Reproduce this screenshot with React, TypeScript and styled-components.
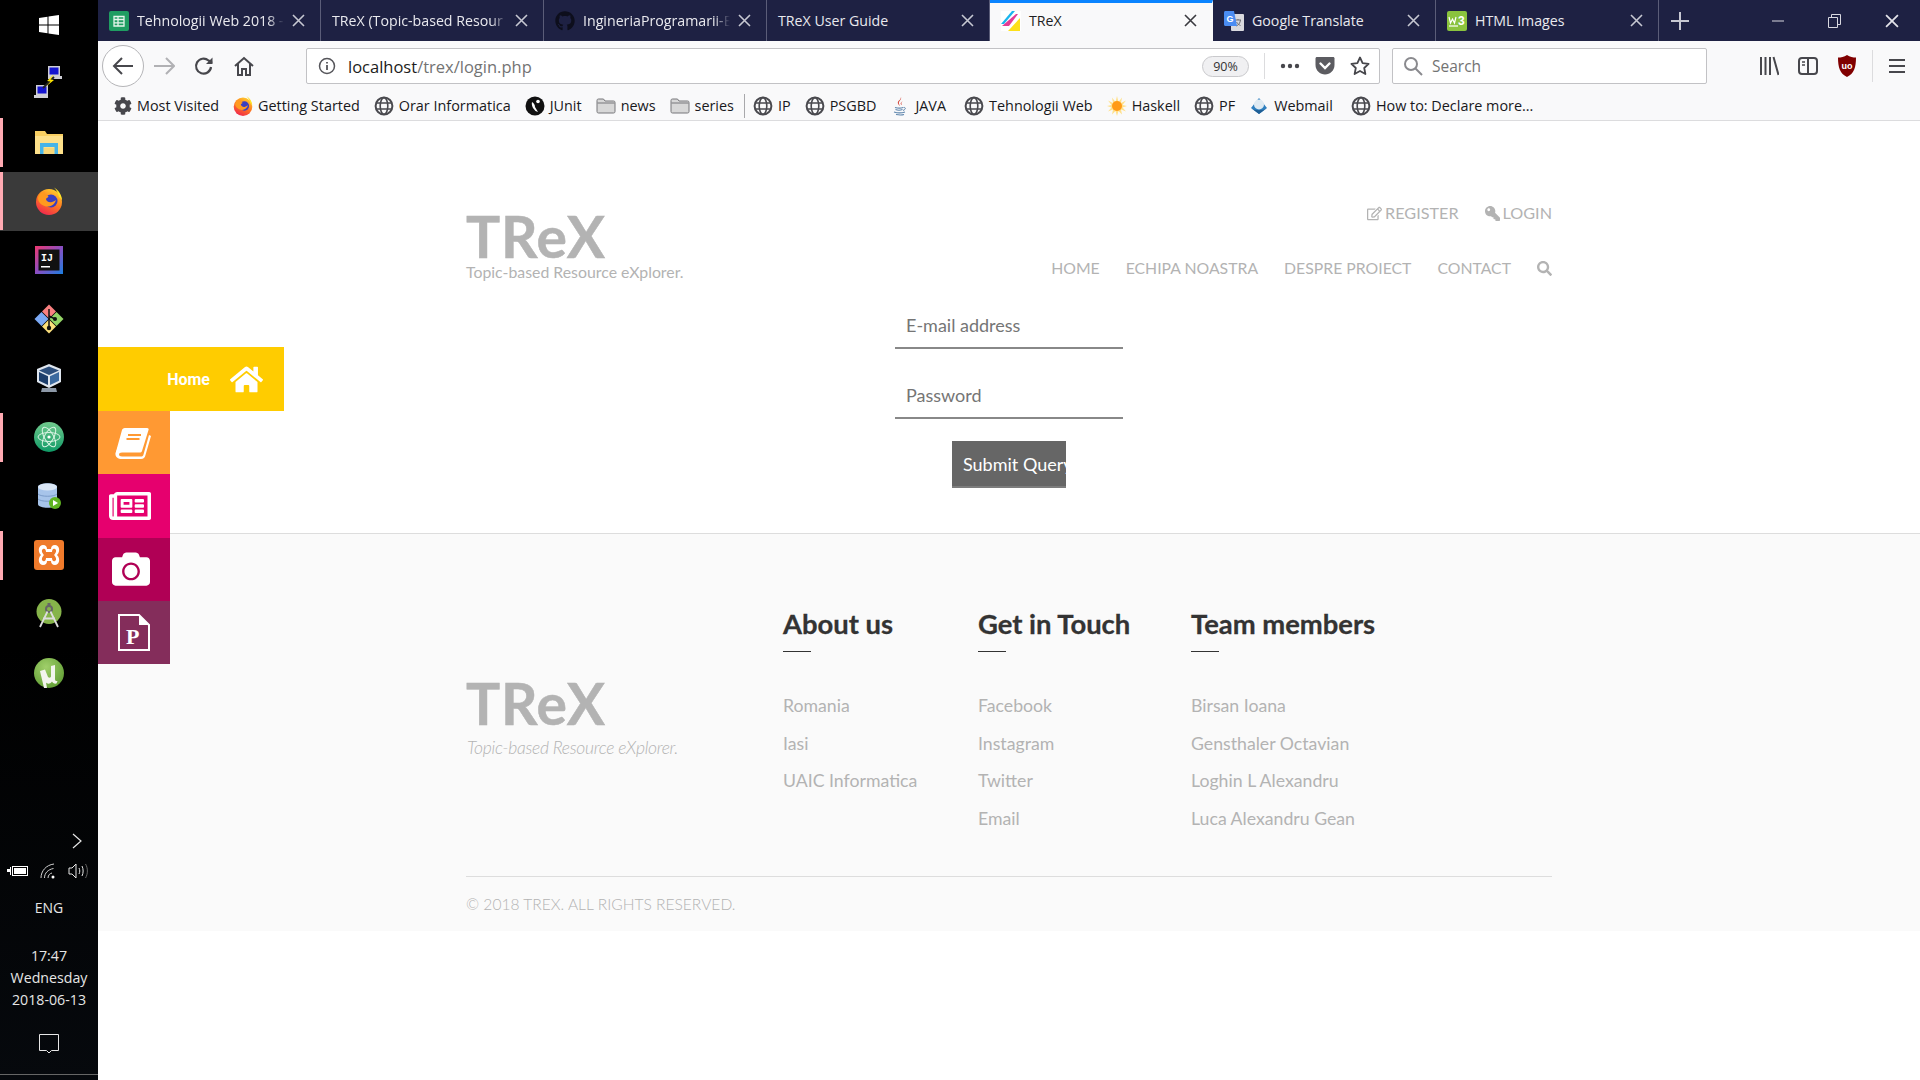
import React from 'react';
import styled, { createGlobalStyle } from 'styled-components';
import { FaCamera, FaCog, FaGithub, FaHome, FaKey, FaRegEdit, FaRegNewspaper, FaSearch } from 'react-icons/fa';

const UI_FONT = '"Open Sans", "Noto Sans", sans-serif';

const GlobalStyle = createGlobalStyle`
  html, body {
    margin: 0;
    padding: 0;
    background: #fff;
  }
  * {
    box-sizing: border-box;
  }
`;

/* ---------- small drawings ---------- */

const Globe = () => (
  <svg width="20" height="20" viewBox="0 0 20 20" fill="none" stroke="#4a4a4f" strokeWidth="1.6">
    <circle cx="10" cy="10" r="8.4" strokeWidth="2" />
    <ellipse cx="10" cy="10" rx="3.8" ry="8.4" />
    <path d="M2 7h16M2 13h16" />
  </svg>
);

const Folder = () => (
  <svg width="20" height="20" viewBox="0 0 20 20">
    <path d="M1 4.5C1 3.5 1.6 3 2.5 3h5l1.5 2h8.5c1 0 1.500.6 1.500 1.500v9c0 1-.6 1.500-1.500 1.500h-15C1.600 17 1 16.500 1 15.500z" fill="#d8d8d8" stroke="#77777a" />
    <path d="M1.500 7h17" stroke="#77777a" />
  </svg>
);

const FirefoxIcon = ({ size = 20 }: { size?: number }) => (
  <svg width={size} height={size} viewBox="0 0 28 28">
    <defs>
      <linearGradient id={`fx${size}`} x1="0.8" y1="0" x2="0.3" y2="1">
        <stop offset="0" stopColor="#ffd52e" />
        <stop offset="0.5" stopColor="#ff7a1f" />
        <stop offset="1" stopColor="#f0264f" />
      </linearGradient>
    </defs>
    <circle cx="14" cy="15" r="13" fill={`url(#fx${size})`} />
    <path d="M19 .5c5 3 8 8 8 13-1-2-2-3-3-3.500-.5-3.500-2.500-7-5-9.500z" fill="#ffe226" />
    <circle cx="16" cy="14" r="6.500" fill="#3a3fc0" />
    <path d="M3 11c1-4 4-6 7-6.500-1 1.500-1 2.500 0 3.500 1.500.5 3 .5 3.500 1.500-1 1.500-2.500 1.500-2.500 2.500 0 2 3 4 6 3 2-.5 3-1.500 4-2-1 4-5 7-9 6.500-5-.5-9-4-9-8.500z" fill="#ff9a1f" />
  </svg>
);

const SheetsIcon = () => (
  <svg width="20" height="20" viewBox="0 0 20 20">
    <rect width="20" height="20" rx="2" fill="#1f9d62" />
    <path d="M5 5.500h10v9.500H5zM5 8.500h10M5 11.800h10M9 5.500V15" fill="none" stroke="#e6f5ec" strokeWidth="1.300" />
  </svg>
);

const TrexIcon = () => (
  <svg width="20" height="20" viewBox="0 0 20 20">
    <rect width="20" height="20" fill="#fff" />
    <path d="M0 13 11 0h3L3 13z" fill="#19b5ee" />
    <path d="M1 15 15 3h2L8 15z" fill="#e23c96" />
    <path d="M7 20 19 7v13z" fill="#fde019" />
  </svg>
);

const TranslateIcon = () => (
  <svg width="20" height="20" viewBox="0 0 20 20">
    <rect x="7" y="3" width="13" height="17" rx="1" fill="#d9d9de" />
    <path d="M11 9h6M14 8v1M12 15c3-1 4-3 4.500-6M12.500 11c1 2 3 3 4 3.500" stroke="#6d6d73" fill="none" />
    <path d="M1.500 0H10l3 15H1.500C.6 15 0 14.400 0 13.500V1.500C0 .6.600 0 1.500 0z" fill="#4a8cf2" />
    <text x="2.500" y="11" fontSize="9" fontWeight="700" fontFamily="Liberation Sans, sans-serif" fill="#fff">G</text>
  </svg>
);

const W3Icon = () => (
  <svg width="20" height="20" viewBox="0 0 20 20">
    <rect width="20" height="20" rx="2" fill="#8ac33e" />
    <path d="M2 6l1.500 6 2-4 2 4L9 6" fill="none" stroke="#fff" strokeWidth="1.200" />
    <path d="M2 15h9" stroke="#fff" strokeWidth="1.200" />
    <text x="11" y="14" fontSize="12" fontWeight="700" fontFamily="Liberation Sans, sans-serif" fill="#fff">3</text>
  </svg>
);

const CloseGlyph = ({ $color = '#c7c8d2', size = 13 }: { $color?: string; size?: number }) => (
  <svg width={size} height={size} viewBox="0 0 13 13" stroke={$color} strokeWidth="1.600" fill="none">
    <path d="M1 1l11 11M12 1L1 12" />
  </svg>
);

const JunitIcon = () => (
  <svg width="20" height="20" viewBox="0 0 20 20">
    <circle cx="10" cy="10" r="9.500" fill="#111" />
    <circle cx="13" cy="5.500" r="1.800" fill="#fff" />
    <path d="M7 6c2 1 3 3 3 5l3 5-2.500-1L8 12c-1-2-1.500-4-1-6z" fill="#fff" />
  </svg>
);

const JavaIcon = () => (
  <svg width="20" height="20" viewBox="0 0 20 20" fill="none">
    <path d="M11 1c1 3-3 4-2 7 .5 1 1 1.500 1 2-2-2-3-3-1.500-5C9.500 4 11 3 11 1zM13 5c-2 1.500-2 2.500-1 4-1.500-.5-2.500-2 1-4z" fill="#d13b2e" />
    <path d="M5 11.500c3 .8 6 .8 8 0M5.500 13.500c2 .8 5 .8 7 0M4 16c3 1 8 1 11 0M6 18.500c3 .6 6 .6 8 0" stroke="#5f86ad" strokeWidth="1.100" />
    <path d="M13.500 11.500c2.500-.5 2.500 2-.5 3" stroke="#5f86ad" />
  </svg>
);

const SunIcon = () => (
  <svg width="20" height="20" viewBox="0 0 20 20">
    <path d="M10 0l1.500 6L15 1.500l-1 5.500 5-2.500-3.500 4.500L20 10l-4.500 1.500 3.500 4-5-2 1 5-3.500-3.500L10 20l-1.500-5-3.500 3.500 1-5-5 2L4.500 11.500 0 10l4.500-1-3.500-4.500 5 2.500-1-5.500L8.500 6z" fill="#ffe08a" />
    <circle cx="10" cy="10" r="5" fill="#ff9a16" />
  </svg>
);

const WebmailIcon = () => (
  <svg width="20" height="20" viewBox="0 0 20 20">
    <path d="M2 12L10 2l8 10-8 6z" fill="#2f7fbf" />
    <circle cx="10" cy="8.500" r="5" fill="#dfeaf2" />
    <path d="M2 12c3 3 13 3 16 0l-8 6z" fill="#1f5f95" />
  </svg>
);

const InfoIcon = () => (
  <svg width="20" height="20" viewBox="0 0 20 20" fill="none" stroke="#55555a" strokeWidth="1.500">
    <circle cx="10" cy="10" r="7.500" />
    <path d="M10 9v5M10 6v1.500" strokeWidth="1.800" />
  </svg>
);

const PocketIcon = () => (
  <svg width="20" height="20" viewBox="0 0 20 20">
    <path d="M2 1h16c1 0 1.500.6 1.500 1.500V9c0 5.500-4.500 9.500-9.500 9.500S.5 14.500.5 9V2.500C.5 1.600 1 1 2 1z" fill="#5c5c61" />
    <path d="M5.500 7.500L10 12l4.500-4.500" fill="none" stroke="#fff" strokeWidth="2.400" strokeLinecap="round" />
  </svg>
);

const StarIcon = () => (
  <svg width="20" height="20" viewBox="0 0 20 20" fill="none" stroke="#47474c" strokeWidth="1.800" strokeLinejoin="round">
    <path d="M10 1.500l2.600 5.600 6 .7-4.400 4.200 1.200 6L10 15l-5.400 3 1.200-6L1.400 7.800l6-.7z" />
  </svg>
);

const UblockIcon = () => (
  <svg width="20" height="24" viewBox="0 0 20 24">
    <path d="M10 1c3 2 6 2.500 9 2.500 0 10-2 16-9 19.500C3 19.500 1 13.500 1 3.500 4 3.500 7 3 10 1z" fill="#800000" />
    <text x="10" y="15" textAnchor="middle" fontSize="9" fontWeight="700" fontFamily="Liberation Sans, sans-serif" fill="#fff">uo</text>
  </svg>
);

/* taskbar icons */

const WindowsLogo = () => (
  <svg width="20" height="20" viewBox="0 0 20 20" fill="#fff">
    <path d="M0 3l8.500-1.300v7.800H0zM9.500 1.500L20 0v9.500H9.500zM0 10.500h8.500v7.800L0 17zM9.500 10.500H20V20L9.500 18.500z" />
  </svg>
);

const PuttyIcon = () => (
  <svg width="30" height="36" viewBox="0 0 30 36">
    <path d="M14 1h12v10H14z" fill="#cfcfd6" />
    <rect x="15.500" y="2.500" width="9" height="7" fill="#1414d0" />
    <path d="M14 11h14v3H14z" fill="#cfcfd6" />
    <path d="M2 20h12v10H2z" fill="#cfcfd6" />
    <rect x="3.500" y="21.500" width="9" height="7" fill="#1414d0" />
    <path d="M0 30h14v3H0z" fill="#cfcfd6" />
    <path d="M9 23L20 12" stroke="#222" strokeWidth="2" />
    <path d="M19 10l-6 6 3.500.5-4.500 5 8-6.500-3.500-.5 3-4.500z" fill="#ffe600" />
  </svg>
);

const ExplorerIcon = () => (
  <svg width="28" height="24" viewBox="0 0 28 24">
    <path d="M0 1h10l2 3h16v20H0z" fill="#f8cf62" />
    <path d="M0 6h28v18H0z" fill="#fde08a" />
    <path d="M5 13h18v11h-3.500v-7h-11v7H5z" fill="#46b4e8" />
    <rect x="9" y="18" width="10" height="6" fill="#f8d778" />
  </svg>
);

const IdeaIcon = () => (
  <svg width="28" height="28" viewBox="0 0 28 28">
    <defs>
      <linearGradient id="ideaFrame" x1="0" y1="0" x2="1" y2="1">
        <stop offset="0" stopColor="#f0386f" />
        <stop offset="0.5" stopColor="#8a4ec2" />
        <stop offset="1" stopColor="#1a7fe0" />
      </linearGradient>
    </defs>
    <rect width="28" height="28" fill="url(#ideaFrame)" />
    <rect x="3.500" y="3.500" width="21" height="21" fill="#111" />
    <text x="6" y="15" fontSize="10" fontWeight="700" fontFamily="Liberation Mono, monospace" fill="#fff">IJ</text>
    <rect x="6" y="20" width="9" height="1.500" fill="#fff" />
  </svg>
);

const KrakenIcon = () => (
  <svg width="30" height="30" viewBox="0 0 30 30">
    <path d="M15 .5L22 7.500 15 14.500 8 7.500z" fill="#f98080" />
    <path d="M7.500 8L14.500 15 7.500 22 .5 15z" fill="#7ba9f5" />
    <path d="M22.500 8L29.500 15 22.500 22 15.500 15z" fill="#93d466" />
    <path d="M15 15.500L22 22.500 15 29.500 8 22.500z" fill="#fadf7c" />
    <path d="M15 5v19M15 12l6 3" stroke="#111" strokeWidth="1.500" fill="none" />
    <circle cx="21" cy="15" r="2" fill="#111" />
    <circle cx="15" cy="24" r="2.200" fill="#111" />
  </svg>
);

const VboxIcon = () => (
  <svg width="26" height="28" viewBox="0 0 26 28">
    <path d="M13 0l12 5v13l-12 6-12-6V5z" fill="#dfe6ef" />
    <path d="M13 2.500L23 6.500 13 11 3 6.500z" fill="#2d4f7d" />
    <path d="M3 8l9 4.200V21l-9-4.300z" fill="#1d3e6b" />
    <path d="M23 8l-9 4.200V21l9-4.300z" fill="#3c6a9f" />
    <path d="M6 24h14l1 4H5z" fill="#8d99a8" />
  </svg>
);

const AtomIcon = () => (
  <svg width="30" height="30" viewBox="0 0 30 30">
    <defs>
      <linearGradient id="atomFill" x1="0" y1="0" x2="0" y2="1">
        <stop offset="0" stopColor="#71c98d" />
        <stop offset="1" stopColor="#0f9a66" />
      </linearGradient>
    </defs>
    <circle cx="15" cy="15" r="15" fill="url(#atomFill)" />
    <g fill="none" stroke="#d8f3e2" strokeWidth="1">
      <ellipse cx="15" cy="15" rx="11" ry="4.500" />
      <ellipse cx="15" cy="15" rx="11" ry="4.500" transform="rotate(60 15 15)" />
      <ellipse cx="15" cy="15" rx="11" ry="4.500" transform="rotate(120 15 15)" />
    </g>
    <circle cx="15" cy="15" r="1.600" fill="#fff" />
  </svg>
);

const DbIcon = () => (
  <svg width="24" height="26" viewBox="0 0 24 26">
    <path d="M1 4c0-5 19-5 19 0v17c0 5-19 5-19 0z" fill="#a7c4ea" />
    <ellipse cx="10.500" cy="4" rx="9.500" ry="3.500" fill="#dbe7f6" />
    <path d="M1 11c3 3 16 3 19 0M1 16c3 3 16 3 19 0" stroke="#7a9bc9" fill="none" />
    <circle cx="18" cy="20" r="6" fill="#5fb321" />
    <path d="M16 17l5 3-5 3z" fill="#fff" />
  </svg>
);

const XamppIcon = () => (
  <svg width="30" height="30" viewBox="0 0 30 30">
    <rect width="30" height="30" rx="3" fill="#ef7a2b" />
    <path d="M9 5c3 0 4 2 4 4h4c0-2 1-4 4-4 4 0 6 6 2 10 4 4 2 10-2 10-3 0-4-2-4-4h-4c0 2-1 4-4 4-4 0-6-6-2-10-4-4-2-10 2-10z" fill="#fff" />
    <path d="M9 9c2-1 3 1 3 3h6c0-2 1-4 3-3s1 4-1 6c2 2 3 5 1 6s-3-1-3-3h-6c0 2-1 4-3 3s-1-4 1-6c-2-2-3-5-1-6z" fill="#ef7a2b" />
  </svg>
);

const AndroidIcon = () => (
  <svg width="26" height="30" viewBox="0 0 26 30">
    <circle cx="13" cy="12.500" r="12.500" fill="#86b44a" />
    <circle cx="13" cy="10" r="3" fill="none" stroke="#666" strokeWidth="2" />
    <path d="M11.500 12.500L4 28M14.500 12.500L22 28M7 19.500h12" stroke="#ddd" strokeWidth="1.800" fill="none" />
    <rect x="11.500" y="4" width="3" height="3" fill="#666" />
  </svg>
);

const TorrentIcon = () => (
  <svg width="30" height="30" viewBox="0 0 30 30">
    <defs>
      <radialGradient id="torrentFill" cx="0.4" cy="0.3" r="0.8">
        <stop offset="0" stopColor="#a0cf6a" />
        <stop offset="1" stopColor="#5c9a30" />
      </radialGradient>
    </defs>
    <circle cx="15" cy="15" r="15" fill="url(#torrentFill)" />
    <path d="M6 13l5-1.500L14 19c1.500 1.500 3 .5 3-1V8l4-1v13c0 3 .5 3 2.500 3l-1 2.500c-2 .5-4-.5-4.500-2-2 3-5 2.500-6 1L13 30h-3z" fill="#f3f5ee" />
  </svg>
);

/* ---------- taskbar ---------- */

const Root = styled.div`
  display: flex;
  width: 1920px;
  height: 1080px;
  overflow: hidden;
  background: #fff;
`;

const Taskbar = styled.aside`
  display: flex;
  flex-direction: column;
  flex: 0 0 98px;
  background: linear-gradient(#000 60%, #06090d);
  color: #e6e6e6;
  font-family: ${UI_FONT};
`;

const StartButton = styled.div`
  display: flex;
  align-items: center;
  justify-content: center;
  height: 54px;
  padding-bottom: 4px;
`;

const TaskItem = styled.div<{ $open?: boolean; $active?: boolean }>`
  position: relative;
  display: flex;
  align-items: center;
  justify-content: center;
  height: 59px;
  padding-bottom: 2px;
  background: ${p => (p.$active ? '#3a3a3a' : 'transparent')};

  &::before {
    content: '';
    display: ${p => (p.$open ? 'block' : 'none')};
    position: absolute;
    left: 0;
    top: ${p => (p.$active ? '0' : '5px')};
    bottom: ${p => (p.$active ? '1px' : '5px')};
    width: 3px;
    background: #ffaab2;
  }
`;

const Tray = styled.div`
  display: flex;
  flex-direction: column;
  align-items: center;
  margin-top: auto;
`;

const TrayChevron = styled.svg`
  align-self: flex-end;
  margin: 0 16px 14px 0;
`;

const TrayIcons = styled.div`
  display: flex;
  align-self: flex-start;
  align-items: center;
  gap: 12px;
  height: 16px;
  padding-left: 7px;
`;

const TrayLang = styled.div`
  margin-top: 19px;
  font-size: 14px;
  line-height: 20px;
`;

const TrayClock = styled.div`
  margin-top: 27px;
  font-size: 14.200px;
  line-height: 22px;
  text-align: center;
`;

const NotifyIcon = styled.svg`
  margin-top: 23px;
`;

const TrayEdge = styled.div`
  align-self: stretch;
  height: 1px;
  margin: 20px 0 5px;
  background: #666;
`;

/* ---------- browser chrome ---------- */

const Main = styled.div`
  display: flex;
  flex-direction: column;
  flex: 1;
  min-width: 0;
`;

const TabStrip = styled.div`
  display: flex;
  flex: 0 0 41px;
  background: #1e2143;
  font-family: ${UI_FONT};
  font-size: 14.200px;
`;

const Tab = styled.div<{ $active?: boolean }>`
  display: flex;
  align-items: center;
  gap: 8px;
  flex: 0 0 223px;
  min-width: 0;
  padding: 0 15px ${p => (p.$active ? '3px' : '0')} 11px;
  color: ${p => (p.$active ? '#1e1e22' : '#e9e9ee')};
  background: ${p => (p.$active ? '#f9f9fa' : 'transparent')};
  border-top: ${p => (p.$active ? '3px solid #0a84ff' : 'none')};
  border-right: 1px solid ${p => (p.$active ? 'transparent' : '#5b5d78')};
`;

const TabTitle = styled.span<{ $fade?: boolean }>`
  flex: 1;
  min-width: 0;
  white-space: nowrap;
  ${p =>
    p.$fade &&
    `-webkit-mask-image: linear-gradient(to left, transparent, #000 16px);
     mask-image: linear-gradient(to left, transparent, #000 16px);`}
`;

const NewTab = styled.div`
  display: flex;
  align-items: center;
  justify-content: center;
  width: 42px;
`;

const WindowControls = styled.div`
  display: flex;
  align-items: center;
  margin-left: auto;
`;

const WindowButton = styled.div`
  display: flex;
  align-items: center;
  justify-content: center;
  width: 57px;
  height: 41px;
`;

const Toolbar = styled.div`
  display: flex;
  align-items: center;
  flex: 0 0 50px;
  padding-left: 4px;
  background: #f9f9fa;
`;

const BackButton = styled.div`
  display: flex;
  align-items: center;
  justify-content: center;
  flex: 0 0 42px;
  height: 42px;
  background: #fff;
  border: 1px solid #b5b5b8;
  border-radius: 50%;
`;

const NavButton = styled.div`
  display: flex;
  align-items: center;
  justify-content: center;
  flex: 0 0 40px;
`;

const UrlBar = styled.div`
  display: flex;
  align-items: center;
  gap: 15px;
  flex: 0 0 1074px;
  height: 36px;
  margin-left: 42px;
  padding: 0 9px 0 10px;
  background: #fff;
  border: 1px solid #c2c2c5;
  border-radius: 2px;
  font-family: ${UI_FONT};
`;

const UrlText = styled.div`
  flex: 1;
  margin-left: -4px;
  color: #737373;
  font-size: 16.500px;
  b {
    color: #1c1c20;
    font-weight: 400;
  }
`;

const ZoomPill = styled.div`
  width: 47px;
  height: 21px;
  background: #f0f0f2;
  border: 1px solid #c9c9cc;
  border-radius: 11px;
  color: #333;
  font-size: 12.500px;
  line-height: 19px;
  text-align: center;
`;

const BarDivider = styled.div`
  width: 1px;
  height: 26px;
  background: #dcdcde;
`;

const SearchBar = styled.div`
  display: flex;
  align-items: center;
  gap: 9px;
  flex: 0 0 315px;
  height: 36px;
  margin-left: 12px;
  padding-left: 10px;
  background: #fff;
  border: 1px solid #c2c2c5;
  border-radius: 2px;
  color: #737373;
  font-family: ${UI_FONT};
  font-size: 15.500px;
`;

const ToolGroup = styled.div`
  display: flex;
  align-items: center;
  margin-left: 42px;
`;

const ToolButton = styled.div<{ $wide?: boolean }>`
  display: flex;
  align-items: center;
  justify-content: center;
  flex: 0 0 ${p => (p.$wide ? '47px' : '39px')};
`;

const ToolDivider = styled.div`
  width: 1px;
  height: 32px;
  margin-left: 6px;
  background: #dcdcde;
`;

const BookmarkBar = styled.div`
  display: flex;
  align-items: center;
  gap: 14px;
  flex: 0 0 30px;
  padding-left: 16px;
  background: #f9f9fa;
  border-bottom: 1px solid #dcdcde;
  color: #18181c;
  font-family: ${UI_FONT};
  font-size: 14.400px;
`;

const Bookmark = styled.div<{ $after?: number }>`
  display: flex;
  align-items: center;
  gap: 5px;
  margin-right: ${p => p.$after ?? 0}px;
  white-space: nowrap;
`;

const BookmarkSep = styled.div`
  width: 1px;
  height: 24px;
  margin: 0 -6px 0 -4px;
  background: #a8a8ab;
`;

/* ---------- page ---------- */

const Page = styled.main`
  position: relative;
  flex: 1;
  font-family: Lato, "Open Sans", sans-serif;
  background: #fff;
`;

const Container = styled.div`
  width: 1086px;
  margin: 0 auto;
`;

const HeaderRow = styled(Container)`
  display: flex;
  justify-content: space-between;
`;

const LogoBlock = styled.div`
  padding-top: 88px;
`;

const LogoMark = styled.div`
  color: #b3b3b3;
  font-size: 57px;
  font-weight: 700;
  letter-spacing: 0.800px;
  line-height: 55px;
  -webkit-text-stroke: 0.500px #b3b3b3;
`;

const LogoTag = styled.div`
  color: #b3b3b3;
  font-size: 15.850px;
  line-height: 16px;
`;

const HeaderRight = styled.div`
  display: flex;
  flex-direction: column;
  align-items: flex-end;
  padding-top: 82px;
  color: #b3b3b3;
  font-size: 16.200px;
  line-height: 20px;
`;

const AuthLinks = styled.div`
  display: flex;
  gap: 26px;
`;

const AuthLink = styled.a`
  display: flex;
  align-items: center;
  gap: 3px;
  svg {
    font-size: 15px;
  }
`;

const KeyGlyph = styled(FaKey)`
  transform: scaleX(-1);
`;

const MainNav = styled.nav`
  display: flex;
  align-items: center;
  gap: 26px;
  margin-top: 35px;
  font-size: 15.800px;
  svg {
    font-size: 15px;
  }
`;

const LoginForm = styled.form`
  display: flex;
  flex-direction: column;
  align-items: center;
  width: 228px;
  margin: 25px auto 45px;
`;

const Field = styled.input`
  display: block;
  width: 100%;
  height: 44px;
  margin-bottom: 26px;
  padding: 0 12px 3px 11px;
  background: transparent;
  border: 0;
  border-bottom: 2px solid #888;
  outline: none;
  font-family: inherit;
  font-size: 18px;
  &::placeholder {
    color: #757575;
    opacity: 1;
  }
`;

const SubmitButton = styled.button`
  width: 114px;
  height: 47px;
  margin-top: -4px;
  padding: 0 11px;
  overflow: hidden;
  background: #666;
  border: 0;
  border-bottom: 2px solid #7d7d7d;
  color: #fff;
  font-family: inherit;
  font-size: 18px;
  text-align: left;
  white-space: nowrap;
`;

const Footer = styled.footer`
  height: 398px;
  background: #fafafa;
  border-top: 1px solid #ddd;
`;

const FooterColumns = styled.div`
  display: flex;
  padding-top: 75px;
`;

const FooterLogo = styled.div`
  flex: 0 0 317px;
  padding-top: 67px;
`;

const FooterTag = styled.div`
  margin-top: 7px;
  padding-left: 1px;
  color: #b3b3b3;
  font-size: 17.500px;
  font-style: italic;
  font-weight: 300;
  letter-spacing: -0.290px;
  line-height: 20px;
  white-space: nowrap;
`;

const FooterColumn = styled.div<{ $width: number }>`
  flex: 0 0 ${p => p.$width}px;
`;

const FooterHeading = styled.h3`
  margin: 0;
  color: #333;
  font-size: 27.400px;
  font-weight: 700;
  line-height: 30px;
  white-space: nowrap;
  -webkit-text-stroke: 0.300px #333;
  &::after {
    content: '';
    display: block;
    width: 28px;
    height: 1px;
    margin-top: 12px;
    background: #333;
  }
`;

const FooterList = styled.ul`
  margin: 35px 0 0;
  padding: 0;
  list-style: none;
  color: #b3b3b3;
  font-size: 17.700px;
  line-height: 37.700px;
  li {
    white-space: nowrap;
  }
`;

const FooterBottom = styled(Container)`
  margin-top: 38px;
  padding-top: 17px;
  border-top: 1px solid #ddd;
  color: #b3b3b3;
  font-size: 15.600px;
  font-weight: 300;
  line-height: 20px;
`;

/* ---------- floating social menu ---------- */

const SideMenu = styled.div`
  position: absolute;
  left: 0;
  top: 226px;
  display: flex;
  flex-direction: column;
  align-items: flex-start;
`;

const SideItem = styled.div<{ $bg: string; $wide?: boolean; $nudge?: number }>`
  display: flex;
  align-items: center;
  justify-content: ${p => (p.$wide ? 'flex-end' : 'center')};
  gap: 20px;
  width: ${p => (p.$wide ? '186px' : '72px')};
  height: ${p => (p.$wide ? '64px' : '63.250px')};
  padding-right: ${p => (p.$wide ? 21 : p.$nudge ?? 0)}px;
  background: ${p => p.$bg};
  color: #fff;
  font-family: Roboto, sans-serif;
  font-size: 16px;
  font-weight: 700;
`;

type BookmarkEntry = { label: string; icon: React.ReactNode; after?: number };

const bookmarks: BookmarkEntry[] = [
  { label: 'Most Visited', icon: <FaCog size={18} color="#47474c" /> },
  { label: 'Getting Started', icon: <FirefoxIcon /> },
  { label: 'Orar Informatica', icon: <Globe /> },
  { label: 'JUnit', icon: <JunitIcon /> },
  { label: 'news', icon: <Folder /> },
  { label: 'series', icon: <Folder /> },
];

const bookmarksAfter: BookmarkEntry[] = [
  { label: 'IP', icon: <Globe /> },
  { label: 'PSGBD', icon: <Globe /> },
  { label: 'JAVA', icon: <JavaIcon />, after: 4 },
  { label: 'Tehnologii Web', icon: <Globe /> },
  { label: 'Haskell', icon: <SunIcon /> },
  { label: 'PF', icon: <Globe /> },
  { label: 'Webmail', icon: <WebmailIcon />, after: 4 },
  { label: 'How to: Declare more...', icon: <Globe /> },
];

const tabs: { title: string; icon?: React.ReactNode; active?: boolean; fade?: boolean }[] = [
  { title: 'Tehnologii Web 2018 -', icon: <SheetsIcon />, fade: true },
  { title: 'TReX (Topic-based Resour', fade: true },
  { title: 'IngineriaProgramarii-E', icon: <FaGithub size={20} color="#0d0e1c" />, fade: true },
  { title: 'TReX User Guide' },
  { title: 'TReX', icon: <TrexIcon />, active: true },
  { title: 'Google Translate', icon: <TranslateIcon /> },
  { title: 'HTML Images', icon: <W3Icon /> },
];

const taskIcons: { icon: React.ReactNode; open?: boolean; active?: boolean }[] = [
  { icon: <PuttyIcon /> },
  { icon: <ExplorerIcon />, open: true },
  { icon: <FirefoxIcon size={28} />, open: true, active: true },
  { icon: <IdeaIcon /> },
  { icon: <KrakenIcon /> },
  { icon: <VboxIcon /> },
  { icon: <AtomIcon />, open: true },
  { icon: <DbIcon /> },
  { icon: <XamppIcon />, open: true },
  { icon: <AndroidIcon /> },
  { icon: <TorrentIcon /> },
];

const footerColumns = [
  { title: 'About us', width: 195, items: ['Romania', 'Iasi', 'UAIC Informatica'] },
  { title: 'Get in Touch', width: 213, items: ['Facebook', 'Instagram', 'Twitter', 'Email'] },
  { title: 'Team members', width: 190, items: ['Birsan Ioana', 'Gensthaler Octavian', 'Loghin L Alexandru', 'Luca Alexandru Gean'] },
];

const renderBookmark = (b: BookmarkEntry) => (
  <Bookmark key={b.label} $after={b.after}>
    {b.icon}
    {b.label}
  </Bookmark>
);

const App: React.FC = () => (
  <Root>
    <GlobalStyle />
    <Taskbar>
      <StartButton>
        <WindowsLogo />
      </StartButton>
      {taskIcons.map((t, i) => (
        <TaskItem key={i} $open={t.open} $active={t.active}>
          {t.icon}
        </TaskItem>
      ))}
      <Tray>
        <TrayChevron width="10" height="16" viewBox="0 0 10 16" fill="none" stroke="#e6e6e6" strokeWidth="1.200">
          <path d="M1 1l8 7-8 7" />
        </TrayChevron>
        <TrayIcons>
          <svg width="21" height="12" viewBox="0 0 21 12">
            <rect x="5.500" y="1.500" width="15" height="9" fill="#000" stroke="#fff" />
            <rect x="7" y="3" width="12" height="6" fill="#fff" />
            <path d="M0 4h3V2h1v8H3V7H0z" fill="#fff" />
          </svg>
          <svg width="16" height="16" viewBox="0 0 16 16" fill="none" stroke="#d0d0d0">
            <path d="M1 15C1 8 6 2 14 1M4.500 15c0-5 3.500-8.500 9-9.500M8 15c0-3 2-4.500 4-5" />
            <circle cx="13" cy="14" r="1.500" fill="#fff" stroke="none" />
          </svg>
          <svg width="21" height="16" viewBox="0 0 21 16" fill="none" stroke="#e6e6e6">
            <path d="M1 5h3l4-4v14l-4-4H1zM11 5c1 2 1 4 0 6M14 3c1.500 3 1.500 7 0 10" />
            <path d="M17.500 1c2.500 4 2.500 10 0 14" stroke="#666" />
          </svg>
        </TrayIcons>
        <TrayLang>ENG</TrayLang>
        <TrayClock>
          17:47
          <br />
          Wednesday
          <br />
          2018-06-13
        </TrayClock>
        <NotifyIcon width="20" height="20" viewBox="0 0 20 20" fill="none" stroke="#e6e6e6">
          <path d="M.5.500h19v16h-7L10 19l-2.500-2.500h-7z" />
        </NotifyIcon>
        <TrayEdge />
      </Tray>
    </Taskbar>

    <Main>
      <TabStrip>
        {tabs.map(t => (
          <Tab key={t.title} $active={t.active}>
            {t.icon}
            <TabTitle $fade={t.fade}>{t.title}</TabTitle>
            <CloseGlyph $color={t.active ? '#3a3a40' : '#c7c8d2'} />
          </Tab>
        ))}
        <NewTab>
          <svg width="18" height="18" viewBox="0 0 18 18" stroke="#c7c8d2" strokeWidth="2">
            <path d="M9 0v18M0 9h18" />
          </svg>
        </NewTab>
        <WindowControls>
          <WindowButton>
            <svg width="12" height="2" viewBox="0 0 12 2" stroke="#d8d8e0">
              <path d="M0 1h12" />
            </svg>
          </WindowButton>
          <WindowButton>
            <svg width="13" height="14" viewBox="0 0 13 14" fill="none" stroke="#d8d8e0">
              <path d="M.5 3.500h9v10h-9zM3.500 3.500V.5h9v10h-3" />
            </svg>
          </WindowButton>
          <WindowButton>
            <CloseGlyph $color="#e4e4ea" size={14} />
          </WindowButton>
        </WindowControls>
      </TabStrip>

      <Toolbar>
        <BackButton>
          <svg width="22" height="20" viewBox="0 0 22 20" fill="none" stroke="#47474c" strokeWidth="2">
            <path d="M10 2L2 10l8 8M2 10h19" />
          </svg>
        </BackButton>
        <NavButton>
          <svg width="21" height="18" viewBox="0 0 21 18" fill="none" stroke="#b1b1b4" strokeWidth="2">
            <path d="M12 1l8 8-8 8M20 9H0" />
          </svg>
        </NavButton>
        <NavButton>
          <svg width="20" height="20" viewBox="0 0 20 20" fill="none" stroke="#47474c" strokeWidth="2.200">
            <path d="M17 11a7.500 7.500 0 1 1-2.500-6.500L18 7" />
            <path d="M18.500 1.500V8H12" fill="#47474c" stroke="none" />
          </svg>
        </NavButton>
        <NavButton>
          <svg width="20" height="20" viewBox="0 0 20 20" fill="none" stroke="#47474c" strokeWidth="2">
            <path d="M1 10l9-8 9 8M4 8v11h4v-6h4v6h4V8" />
          </svg>
        </NavButton>
        <UrlBar>
          <InfoIcon />
          <UrlText>
            <b>localhost</b>/trex/login.php
          </UrlText>
          <ZoomPill>90%</ZoomPill>
          <BarDivider />
          <svg width="20" height="6" viewBox="0 0 20 6" fill="#47474c">
            <circle cx="3" cy="3" r="2.200" />
            <circle cx="10" cy="3" r="2.200" />
            <circle cx="17" cy="3" r="2.200" />
          </svg>
          <PocketIcon />
          <StarIcon />
        </UrlBar>
        <SearchBar>
          <svg width="20" height="20" viewBox="0 0 20 20" fill="none" stroke="#8a8a8e" strokeWidth="2">
            <circle cx="8" cy="8" r="6" />
            <path d="M12.500 12.500L19 19" />
          </svg>
          Search
        </SearchBar>
        <ToolGroup>
          <ToolButton>
            <svg width="20" height="20" viewBox="0 0 20 20" stroke="#47474c" strokeWidth="2" fill="none">
              <path d="M2 1v18M6.500 1v18M11 1v18M14.500 1l5 18" />
            </svg>
          </ToolButton>
          <ToolButton>
            <svg width="20" height="20" viewBox="0 0 20 20" stroke="#47474c" strokeWidth="2" fill="none">
              <rect x="1" y="2" width="18" height="16" rx="3" />
              <path d="M10 2v16" />
              <path d="M4 6h3M4 9h3" strokeWidth="1.500" />
            </svg>
          </ToolButton>
          <ToolButton>
            <UblockIcon />
          </ToolButton>
          <ToolDivider />
          <ToolButton $wide>
            <svg width="16" height="16" viewBox="0 0 16 16" stroke="#47474c" strokeWidth="2">
              <path d="M0 2h16M0 8h16M0 14h16" />
            </svg>
          </ToolButton>
        </ToolGroup>
      </Toolbar>

      <BookmarkBar>
        {bookmarks.map(renderBookmark)}
        <BookmarkSep />
        {bookmarksAfter.map(renderBookmark)}
      </BookmarkBar>

      <Page>
        <HeaderRow>
          <LogoBlock>
            <LogoMark>TReX</LogoMark>
            <LogoTag>Topic-based Resource eXplorer.</LogoTag>
          </LogoBlock>
          <HeaderRight>
            <AuthLinks>
              <AuthLink>
                <FaRegEdit />
                REGISTER
              </AuthLink>
              <AuthLink>
                <KeyGlyph />
                LOGIN
              </AuthLink>
            </AuthLinks>
            <MainNav>
              <a>HOME</a>
              <a>ECHIPA NOASTRA</a>
              <a>DESPRE PROIECT</a>
              <a>CONTACT</a>
              <FaSearch />
            </MainNav>
          </HeaderRight>
        </HeaderRow>

        <LoginForm onSubmit={e => e.preventDefault()}>
          <Field type="text" placeholder="E-mail address" />
          <Field type="password" placeholder="Password" />
          <SubmitButton type="submit">Submit Query</SubmitButton>
        </LoginForm>

        <Footer>
          <Container>
            <FooterColumns>
              <FooterLogo>
                <LogoMark>TReX</LogoMark>
                <FooterTag>Topic-based Resource eXplorer.</FooterTag>
              </FooterLogo>
              {footerColumns.map(c => (
                <FooterColumn key={c.title} $width={c.width}>
                  <FooterHeading>{c.title}</FooterHeading>
                  <FooterList>
                    {c.items.map(item => (
                      <li key={item}>{item}</li>
                    ))}
                  </FooterList>
                </FooterColumn>
              ))}
            </FooterColumns>
          </Container>
          <FooterBottom>© 2018 TREX. ALL RIGHTS RESERVED.</FooterBottom>
        </Footer>

        <SideMenu>
          <SideItem $bg="#ffcc00" $wide>
            Home
            <FaHome size={33} />
          </SideItem>
          <SideItem $bg="#ff9933" $nudge={2}>
            <svg width="36" height="32" viewBox="0 0 36 32">
              <path d="M10 1h22c1.500 0 2 1 1.500 2L27 24c-.5 1-1 1.500-2.500 1.500H7c-2 0-3 .8-3 2s1 2 3 2h19c1.500 0 2-.5 2.500-2L34 8l2 1-5.500 19c-.5 2.500-2 4-4.500 4H7c-4 0-7-2-6.500-5.500z" fill="#fff" />
              <path d="M10 1C8 1 7.500 2 7 3L.5 26.500 4 25.500c.5-1 1.500-2 3-2h17L31 3c.5-1 0-2-1-2z" fill="#fff" />
              <path d="M13 8h13M11.500 12h13" stroke="#ff9933" strokeWidth="2" />
            </svg>
          </SideItem>
          <SideItem $bg="#e6006e" $nudge={8}>
            <FaRegNewspaper size={42} />
          </SideItem>
          <SideItem $bg="#b00055" $nudge={6}>
            <FaCamera size={38} />
          </SideItem>
          <SideItem $bg="#842d5b">
            <svg width="32" height="37" viewBox="0 0 32 37" fill="none">
              <path d="M1 1h20l10 10v25H1z" stroke="#fff" strokeWidth="2" />
              <path d="M21 1l10 10H21z" fill="#fff" />
              <text x="8" y="30" fontSize="22" fontWeight="700" fontFamily="Liberation Serif, serif" fill="#fff">P</text>
            </svg>
          </SideItem>
        </SideMenu>
      </Page>
    </Main>
  </Root>
);

export default App;
